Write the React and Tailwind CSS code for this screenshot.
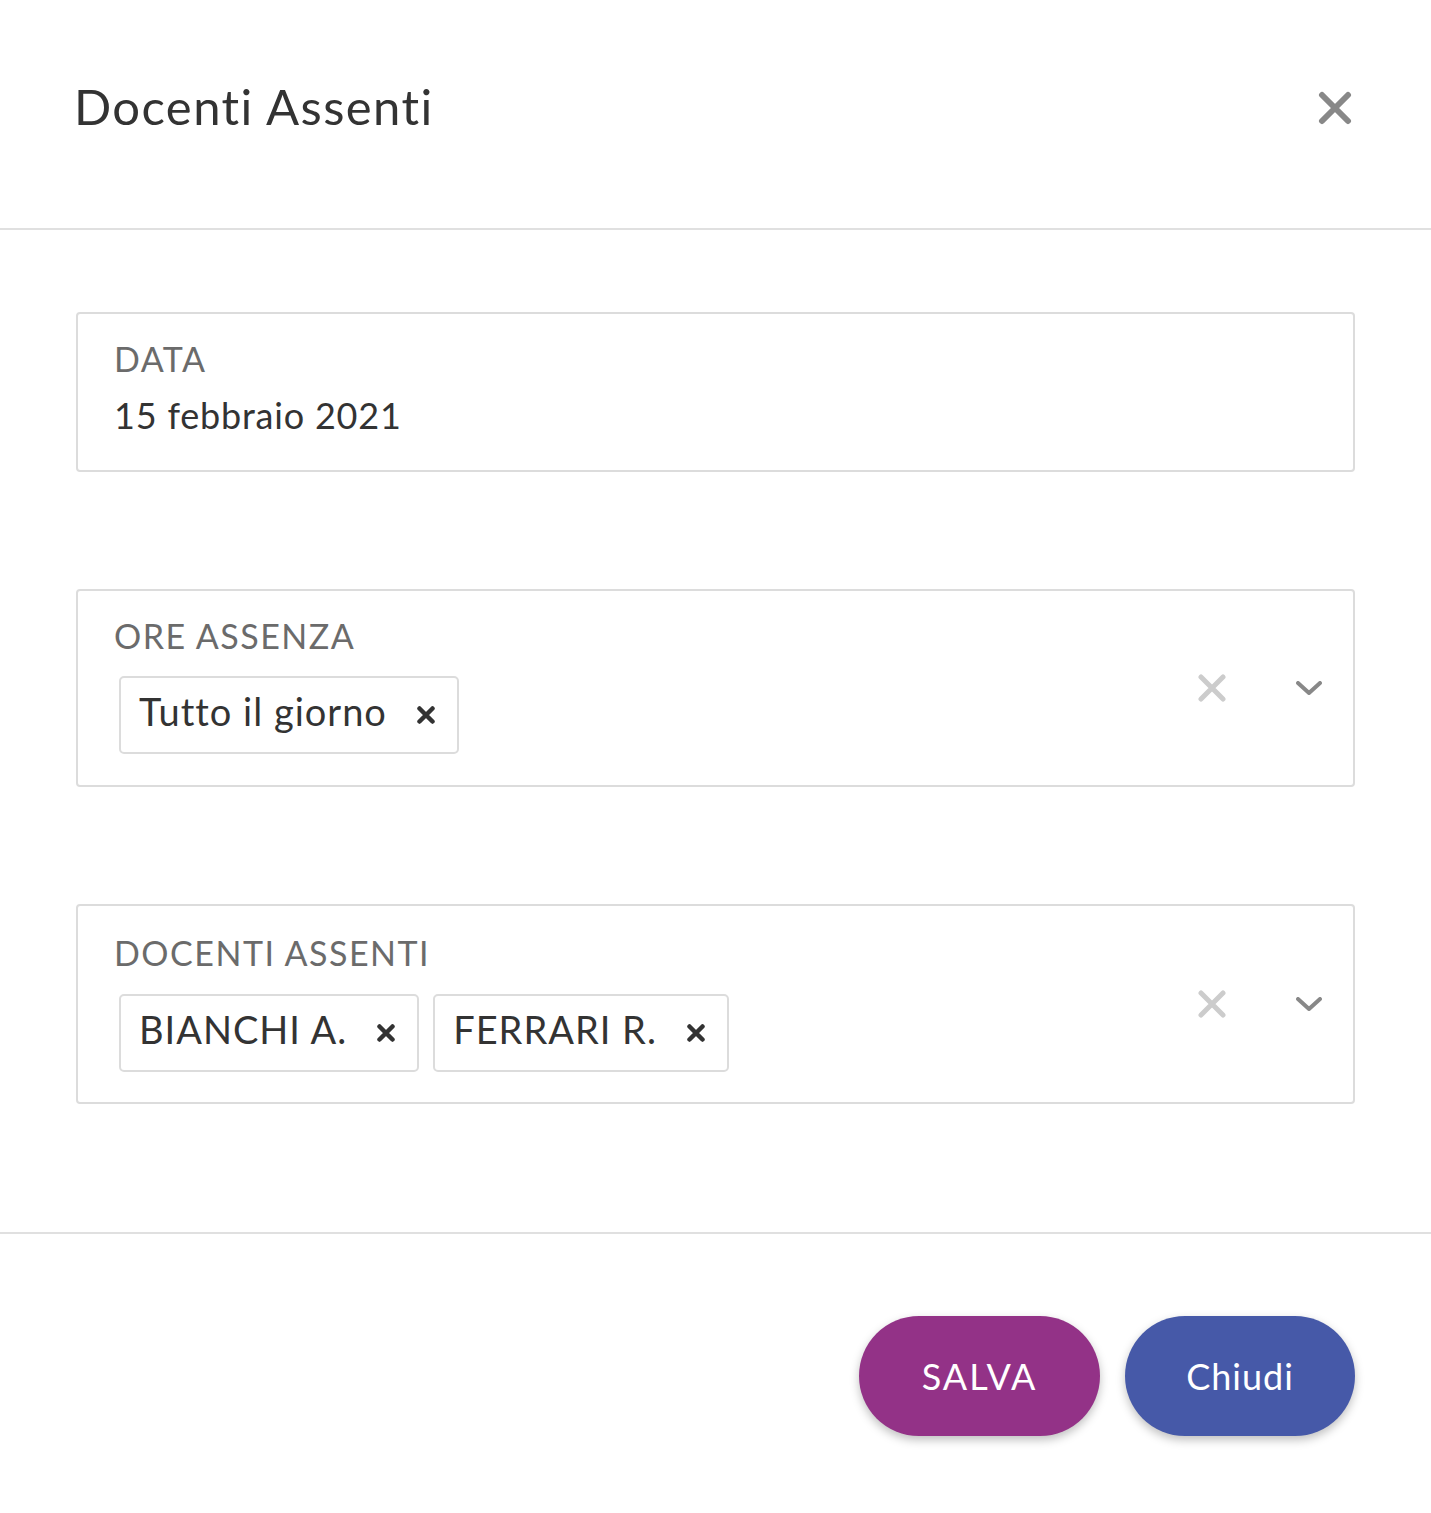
import React from "react";

const font = { fontFamily: "Lato, 'Noto Sans', sans-serif", fontVariantLigatures: "none" };

function ChipX() {
  return (
    <svg width="18" height="18" viewBox="0 0 18 18" className="shrink-0">
      <path d="M2.5 2.5 L15.5 15.5 M15.5 2.5 L2.5 15.5" stroke="#333" strokeWidth="4.5" strokeLinecap="round" />
    </svg>
  );
}

function Chip({ label }) {
  return (
    <div className="flex items-center border-2 border-[#dcdcdc] rounded-[5px] pl-[18px] pr-[22px] pt-[10px] pb-[18px]">
      <span className="text-[38px] leading-[46px] text-[#333] tracking-[1px]">{label}</span>
      <span className="ml-[30px] pt-[8px]">
        <ChipX />
      </span>
    </div>
  );
}

function ClearIcons() {
  return (
    <div className="flex items-center gap-[70px] pr-[31px]">
      <svg width="28" height="28" viewBox="0 0 28 28">
        <path d="M3 3 L25 25 M25 3 L3 25" stroke="#cccccc" strokeWidth="5" strokeLinecap="round" />
      </svg>
      <svg width="26" height="14" viewBox="0 0 26 14">
        <path d="M2 2 L13 12 L24 2" stroke="#888" strokeWidth="4" strokeLinecap="round" strokeLinejoin="round" fill="none" />
      </svg>
    </div>
  );
}

export default function App() {
  return (
    <div className="w-[1431px] h-[1513px] bg-white flex flex-col" style={font}>
      {/* Header */}
      <div className="h-[230px] border-b-2 border-[#e0e0e0] flex justify-between items-start pl-[74px] pr-[79px] pt-[78px]">
        <h1 className="text-[49px] leading-[56px] text-[#333] font-normal tracking-[1.4px]">Docenti Assenti</h1>
        <svg width="34" height="34" viewBox="0 0 34 34" className="mt-[13px]">
          <path d="M4 4 L30 30 M30 4 L4 30" stroke="#888" strokeWidth="6" strokeLinecap="round" />
        </svg>
      </div>

      {/* Body */}
      <div className="px-[76px] pt-[82px] pb-[128px] flex flex-col gap-[117px]">
        <div className="border-2 border-[#dcdcdc] rounded-[4px] pl-[36px] pt-[25px] pb-[33px]">
          <div className="text-[34px] leading-[40px] text-[#6b6b6b] tracking-[1.5px]">DATA</div>
          <div className="mt-[14px] text-[36px] leading-[44px] text-[#333] tracking-[0.8px]">15 febbraio 2021</div>
        </div>

        <div className="border-2 border-[#dcdcdc] rounded-[4px] flex items-center">
          <div className="flex-1 pl-[36px] pt-[25px] pb-[31px]">
            <div className="text-[34px] leading-[40px] text-[#6b6b6b] tracking-[1.5px]">ORE ASSENZA</div>
            <div className="mt-[20px] ml-[5px] flex gap-[14px]">
              <Chip label="Tutto il giorno" />
            </div>
          </div>
          <ClearIcons />
        </div>

        <div className="border-2 border-[#dcdcdc] rounded-[4px] flex items-center">
          <div className="flex-1 pl-[36px] pt-[27px] pb-[30px]">
            <div className="text-[34px] leading-[40px] text-[#6b6b6b] tracking-[1.5px]">DOCENTI ASSENTI</div>
            <div className="mt-[21px] ml-[5px] flex gap-[14px]">
              <Chip label="BIANCHI A." />
              <Chip label="FERRARI R." />
            </div>
          </div>
          <ClearIcons />
        </div>
      </div>

      {/* Footer */}
      <div className="border-t-2 border-[#e0e0e0] flex justify-end gap-[25px] pr-[76px] pt-[82px] pb-[77px]">
        <button className="w-[241px] h-[120px] rounded-full bg-[#933287] text-white text-[36px] tracking-[2px] shadow-[0_4px_10px_rgba(0,0,0,0.25)]">
          SALVA
        </button>
        <button className="w-[230px] h-[120px] rounded-full bg-[#4659a8] text-white text-[36px] tracking-[1px] shadow-[0_4px_10px_rgba(0,0,0,0.25)]">
          Chiudi
        </button>
      </div>
    </div>
  );
}
